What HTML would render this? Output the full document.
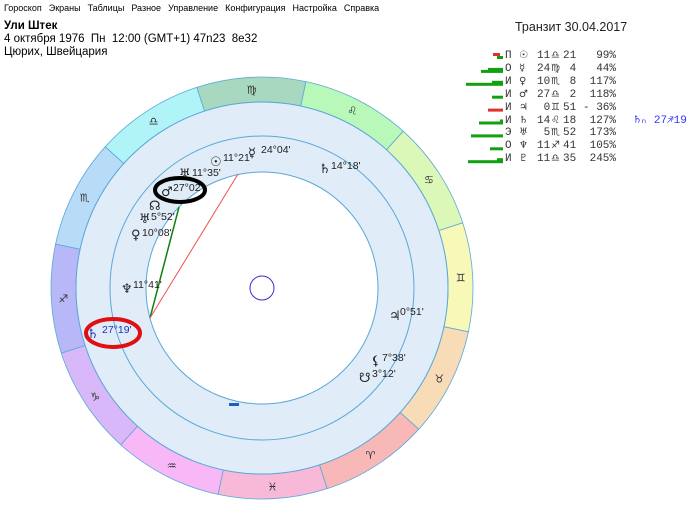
<!DOCTYPE html>
<html><head><meta charset="utf-8"><style>
body{margin:0;width:700px;height:506px;background:#fff;font-family:"Liberation Sans","DejaVu Sans",sans-serif;position:relative;overflow:hidden}
.menu{position:absolute;top:3px;left:4px;font-size:9px;color:#000;word-spacing:0}
.menu span{margin-right:7px}
.t{position:absolute;font-size:11.5px;color:#000}
.r{position:absolute;font-family:"Liberation Mono","DejaVu Sans Mono",monospace;font-size:11px;color:#333;white-space:pre;line-height:12px}
svg{position:absolute;left:0;top:0}
</style></head><body>
<div class="menu"><span>Гороскоп</span><span>Экраны</span><span>Таблицы</span><span>Разное</span><span>Управление</span><span>Конфигурация</span><span>Настройка</span><span>Справка</span></div>
<div class="t" style="left:4px;top:20px;font-weight:bold">Ули Штек</div>
<div class="t" style="left:4px;top:33px">4 октября 1976 &nbsp;Пн &nbsp;12:00 (GMT+1) 47n23 &nbsp;8e32</div>
<div class="t" style="left:4px;top:46px">Цюрих, Швейцария</div>
<div class="t" style="left:515px;top:20px;font-size:12.5px;color:#222">Транзит 30.04.2017</div>
<svg id="s" width="700" height="506" xmlns="http://www.w3.org/2000/svg"></svg>
<div id="tab"></div>
<script>
var s=document.getElementById('s'),cx=262,cy=288,R=211,r1=186,h='';
var col=['#f8f8b8','#dcf8b8','#b8f8b8','#a8d8c0','#b0f4f8','#b8dcf8','#b8b8f8','#d8b8f8','#f8b8f8','#f8b8d8','#f8b8b8','#f8dcb8'];
var gl=['♊','♋','♌','♍','♎','♏','♐','♑','♒','♓','♈','♉'];
function P(r,a){a=a*Math.PI/180;return [cx+r*Math.cos(a),cy-r*Math.sin(a)]}
for(var i=0;i<12;i++){var a0=-12+30*i,a1=a0+30;var p=P(R,a0),q=P(R,a1),u=P(r1,a1),v=P(r1,a0);
h+='<path d="M'+p+' A'+R+','+R+' 0 0 0 '+q+' L'+u+' A'+r1+','+r1+' 0 0 1 '+v+'Z" fill="'+col[i]+'" stroke="#5aa8d8" stroke-width="0.8"/>';
var g=P(199,a0+15);h+='<text x="'+g[0]+'" y="'+(g[1]+4)+'" font-size="11" text-anchor="middle" fill="#333" font-family="DejaVu Sans">'+gl[i]+'</text>';}
h+='<circle cx="'+cx+'" cy="'+cy+'" r="'+r1+'" fill="#e0ecf8" stroke="#5aa8d8"/>';
h+='<circle cx="'+cx+'" cy="'+cy+'" r="152" fill="none" stroke="#5aa8d8"/>';
h+='<circle cx="'+cx+'" cy="'+cy+'" r="116" fill="#fff" stroke="#5aa8d8"/>';
h+='<circle cx="'+cx+'" cy="'+cy+'" r="12" fill="none" stroke="#4030c0"/>';
h+='<line x1="179" y1="207" x2="150" y2="318" stroke="#108010" stroke-width="1.5"/><line x1="238" y1="174" x2="150" y2="318" stroke="#f05050"/>';
h+='<rect x="229" y="403" width="10" height="3" fill="#1a60c0"/>';
var L=[['☉',216,161,'11°21\'',223,157],['☿',254,152,'24°04\'',261,149],['♄',325,168,'14°18\'',331,165],['♅',185,173,'11°35\'',192,172],['♂',167,191,'27°02\'',173,187],['☊',155,205,'',0,0],['♅',145,218,'5°52\'',151,216],['♀',137,234,'10°08\'',142,232],['♆',127,288,'11°41\'',133,284],['♃',395,315,'0°51\'',400,311],['⚸',377,360,'7°38\'',382,357],['☋',365,377,'3°12\'',372,373]];
L.forEach(function(e){h+='<text x="'+(e[1]-6)+'" y="'+(e[2]+5)+'" font-size="13" fill="#222" font-family="DejaVu Sans">'+e[0]+'</text>';if(e[3])h+='<text x="'+e[4]+'" y="'+(e[5]+4)+'" font-size="10.5" fill="#222">'+e[3]+'</text>';});
h+='<text x="87" y="338" font-size="13" fill="#2030c0" font-family="DejaVu Sans">♄</text><text x="102" y="333" font-size="10.5" fill="#2030c0">27°19\'</text>';
h+='<ellipse cx="180" cy="190" rx="25" ry="12" fill="none" stroke="#000" stroke-width="4"/>';
h+='<ellipse cx="113" cy="333" rx="27" ry="14" fill="none" stroke="#e01010" stroke-width="4"/>';
var bars=[[7,'#e03030',493],[22,'#10a010',488],[37,'#10a010',492],[11,'#10a010',0],[15,'#e03030',0],[24,'#10a010',500],[32,'#10a010',0],[13,'#10a010',0],[35,'#10a010',497]];
var rows=[['П','☉','11','♎','21','  99%'],['О','☿','24','♍',' 4','  44%'],['И','♀','10','♏',' 8',' 117%'],['И','♂','27','♎',' 2',' 118%'],['И','♃',' 0','♊','51','- 36%'],['И','♄','14','♌','18',' 127%'],['Э','♅',' 5','♏','52',' 173%'],['О','♆','11','♐','41',' 105%'],['И','♇','11','♎','35',' 245%']];
var t='';
bars.forEach(function(b,k){var y=56+k*12.9;
 if(k==0){h+='<rect x="493" y="'+(y-3)+'" width="7" height="3" fill="#e03030"/><rect x="497" y="'+(y)+'" width="6" height="3" fill="#10a010"/>';}
 else{h+='<rect x="'+(503-b[0])+'" y="'+(y+1)+'" width="'+b[0]+'" height="3" fill="'+b[1]+'"/>';
 if(b[2])h+='<rect x="'+b[2]+'" y="'+(y-1)+'" width="'+(503-b[2])+'" height="2.5" fill="'+b[1]+'"/>';}
 var r=rows[k];
 t+='<div class="r" style="left:505px;top:'+(y-6)+'px">'+r[0]+'</div><div class="r" style="left:519px;top:'+(y-6)+'px;font-family:DejaVu Sans;font-size:10px">'+r[1]+'</div><div class="r" style="left:537px;top:'+(y-6)+'px">'+r[2]+'</div><div class="r" style="left:551px;top:'+(y-6)+'px;font-family:DejaVu Sans;font-size:10px">'+r[3]+'</div><div class="r" style="left:563px;top:'+(y-6)+'px">'+r[4]+'</div><div class="r" style="left:583px;top:'+(y-6)+'px">'+r[5]+'</div>';
 if(k==5)t+='<div class="r" style="left:634px;top:'+(y-6)+'px;color:#33f">♄ₙ 27♐19</div>';
});
s.innerHTML=h;document.getElementById('tab').innerHTML=t;
</script>
</body></html>
